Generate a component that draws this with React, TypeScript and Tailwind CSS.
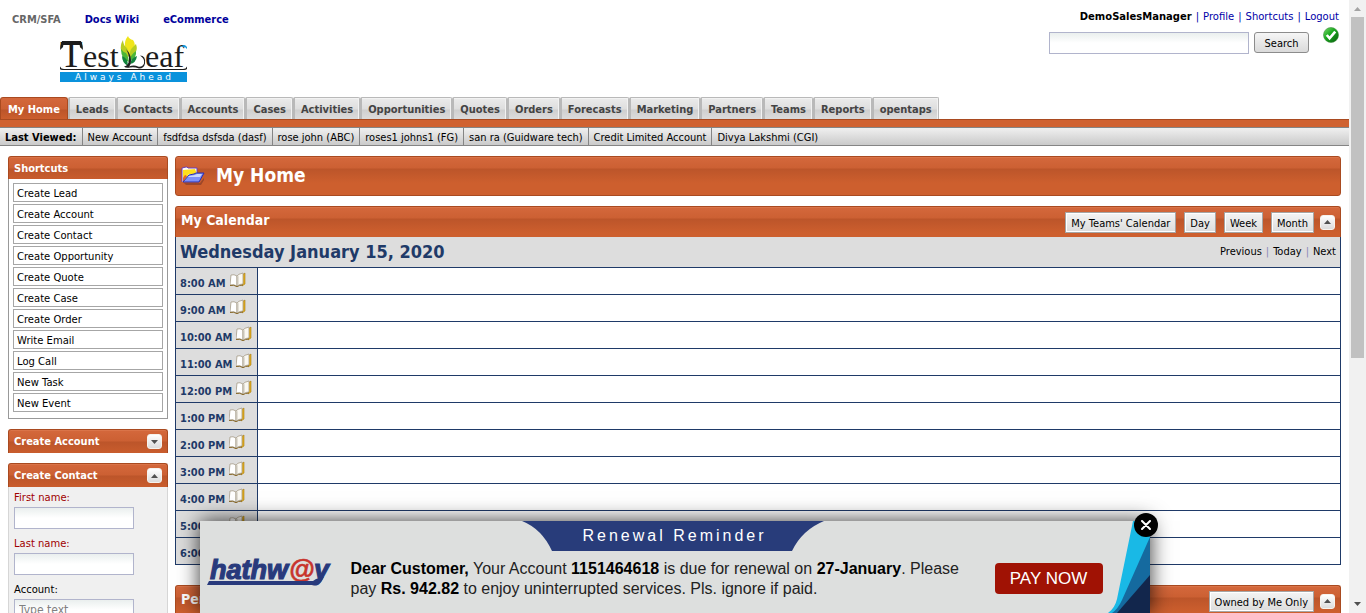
import React from "react";

const TAHOMA = "font-['DejaVu_Sans_Condensed','DejaVu_Sans',sans-serif] [font-stretch:condensed]";
const BAR =
  "border border-[#a94a20] border-b-0 rounded-t-[3px] bg-[linear-gradient(to_bottom,#d4683c_0px,#cc6033_11px,#bc552a_12px,#cd5f2e_26px)] shadow-[inset_0_1px_0_#da7449]";
const FIELD =
  "border border-[#b1b4cc] bg-[linear-gradient(to_bottom,#eaefee_0px,#ffffff_10px)] outline-none h-[22px] px-1";
const SMALL_BTN =
  "h-[21px] border border-[#a5a5a5] bg-linear-to-b from-[#f4f4f4] to-[#dcdcdc] px-[5px] pt-[2px] text-[11px] leading-[17px] text-black shadow-[inset_1px_1px_0_#fff,inset_0_-1px_0_#fff]";

const tabs = [
  "My Home", "Leads", "Contacts", "Accounts", "Cases", "Activities", "Opportunities", "Quotes",
  "Orders", "Forecasts", "Marketing", "Partners", "Teams", "Reports", "opentaps",
];

const viewed = [
  "New Account", "fsdfdsa dsfsda (dasf)", "rose john (ABC)", "roses1 johns1 (FG)",
  "san ra (Guidware tech)", "Credit Limited Account", "Divya Lakshmi (CGI)",
];

const shortcuts = [
  "Create Lead", "Create Account", "Create Contact", "Create Opportunity", "Create Quote",
  "Create Case", "Create Order", "Write Email", "Log Call", "New Task", "New Event",
];

const hours = [
  "8:00 AM", "9:00 AM", "10:00 AM", "11:00 AM", "12:00 PM", "1:00 PM",
  "2:00 PM", "3:00 PM", "4:00 PM", "5:00 PM", "6:00 PM",
];

function TestLeafLogo() {
  return (
    <svg width="128" height="48" viewBox="0 0 128 48" role="img" aria-label="TestLeaf">
      <g fill="#1c1c1c" fontFamily="'Liberation Serif', serif">
        <text x="0" y="31" fontSize="37">T</text>
        <path d="M2 5h19l1 4H1z" />
        <path d="M0 14Q0 6 4 5l-1 6zM23 14Q23 6 19 5l1 6z" />
        <text x="23" y="31" fontSize="32">est</text>
        <text x="85" y="31" fontSize="32">eaf</text>
        <path d="M0 30.500q1 2.500 4 2.500h119q3 0 4-2.500v2.500q-1 1-3 1H3q-3 0-3-1z" />
      </g>
      <path d="M121 11q3-4 6 0v2q-2-3-6-2z" fill="#159ade" />
      <path d="M65 11q-1-6 3-11q1 3 5 4q3 4 1 9l-4 6z" fill="#f0e51a" />
      <path d="M63 4q0 5 4 8l3 9q-7-1-9-7q-1-5 2-10zM76 8q2 6-1 9l-5 5q-1-7 2-10z" fill="#b7cd22" />
      <path d="M61 13q2 3 5 4q3 4 3 9q-8-3-8-13zM76 15q1 7-6 10q0-6 6-10z" fill="#4cb637" />
      <path d="M62 20q6 2 6 10q-6-3-6-10zM77 20q-1 7-7 8q1-6 7-8z" fill="#12833c" />
      <path d="M66 13q5 5 5 11q0 5-2 6.500q5-2 9 0q4 1 6-3q1-5-4-8q6 0 5 8q-1 5-6 5q-5-2-9-1q-4 1-6-1q5-1 5-7q0-6-3-10.500z" fill="#202020" />
      <path d="M0 36h127v10H0z" fill="#0a92dc" />
      <text x="15" y="44" fontSize="9" letterSpacing="3" fill="#fff" fontFamily="'DejaVu Sans', sans-serif">Always Ahead</text>
    </svg>
  );
}

function CheckIcon() {
  return (
    <svg width="16" height="16" viewBox="0 0 17 17" role="img" aria-label="Online">
      <defs>
        <linearGradient id="ball" x1="0" y1="0" x2="1" y2="1">
          <stop offset="0" stopColor="#7fe070" />
          <stop offset=".45" stopColor="#16a51c" />
          <stop offset="1" stopColor="#0b5b10" />
        </linearGradient>
      </defs>
      <circle cx="8.500" cy="8.500" r="8" fill="url(#ball)" stroke="#3a8b3a" strokeWidth=".6" />
      <path d="M4 8.500l3 3.500l6-7" fill="none" stroke="#fff" strokeWidth="2.800" />
    </svg>
  );
}

function FolderIcon() {
  return (
    <svg width="24" height="20" viewBox="0 0 24 20" aria-hidden="true">
      <path d="M3 17h16l4-5v2l-3 5H5z" fill="#7c3526" opacity=".6" />
      <path d="M1 16V2l4-1h1l1 1h9v5" fill="#fff" stroke="#6a3fb4" strokeWidth="1" />
      <path d="M2 4l12-1l2 5H8l-5 8H2z" fill="#ffe01c" />
      <path d="M2 12l2-3l2 1l-4 6z" fill="#e2622a" />
      <path d="M2 16L8 9l5-1l2-1h8l-5 9z" fill="#7d90fa" stroke="#2a30b0" strokeWidth="1" />
      <path d="M8 10l6-1l2-1h5l-2 3H7z" fill="#c9d6ff" />
    </svg>
  );
}

function BookIcon() {
  return (
    <svg width="16" height="16" viewBox="0 0 16 16" aria-hidden="true">
      <path d="M12 3l3-2v11l-3 2z" fill="#e3ad1c" stroke="#a87c14" strokeWidth=".6" />
      <path d="M1 3q3-1 6 1v10q-3-2-7-1z" fill="#fff" stroke="#a59a86" strokeWidth=".8" />
      <path d="M7 4q1-2 6-3v11q-4 0-6 2z" fill="#faf8f2" stroke="#a59a86" strokeWidth=".8" />
      <path d="M7 5l1.500-1v8L7 14z" fill="#c9c4b8" />
      <path d="M0 13.500q4-1 7 1.200q2-1.500 6-1.700" fill="none" stroke="#8a6b2c" strokeWidth="1" />
    </svg>
  );
}

function ToggleButton({ up, label }: { up: boolean; label: string }) {
  return (
    <button
      aria-label={label}
      className="flex h-[15px] w-[15px] items-center justify-center rounded-[3px] border border-[#f6f3ee] bg-linear-to-b from-white to-[#dcdcdc]"
    >
      <svg width="7" height="4" viewBox="0 0 7 4" aria-hidden="true">
        <path d={up ? "M0 4L3.500 0L7 4z" : "M0 0h7L3.500 4z"} fill="#505050" />
      </svg>
    </button>
  );
}

function Header() {
  return (
    <header className="flex h-[97px] justify-between">
      <div>
        <nav className={`${TAHOMA} flex gap-6 pt-3 pl-3 text-[11px] leading-[15px] font-bold`}>
          <span className="text-[#666]">CRM/SFA</span>
          <a href="#wiki" className="text-[#00009c]">Docs Wiki</a>
          <a href="#shop" className="text-[#00009c]">eCommerce</a>
        </nav>
        <div className="pt-[9px] pl-[60px]">
          <TestLeafLogo />
        </div>
      </div>
      <div className="pt-[10px] pr-[10px]">
        <div className="flex justify-end gap-1 font-['DejaVu_Sans',sans-serif] text-[10px] leading-[13px] text-[#0000a8]">
          <b className="text-black">DemoSalesManager</b>|<a href="#profile">Profile</a>|
          <a href="#shortcuts">Shortcuts</a>|<a href="#logout">Logout</a>
        </div>
        <form className="flex items-start justify-end pt-1" onSubmit={(e) => e.preventDefault()}>
          <input aria-label="Search" className={`${FIELD} mt-[5px] w-[200px]`} />
          <button className={`${TAHOMA} mt-[5px] ml-[5px] h-[21px] w-[55px] rounded-[3px] border border-[#8c8c8c] bg-linear-to-b from-[#f6f6f6] to-[#dadada] pt-[2px] text-[11px] leading-[17px]`}>
            Search
          </button>
          <span className="ml-[14px]"><CheckIcon /></span>
        </form>
      </div>
    </header>
  );
}

function Tabs() {
  return (
    <nav className={`${TAHOMA} flex h-[22px] text-[11px] leading-[23px] font-bold whitespace-nowrap`}>
      {tabs.map((t, i) => (
        <a
          key={t}
          href="#tab"
          className={
            i === 0
              ? "rounded-t-[3px] border border-b-0 border-[#a94a20] bg-[linear-gradient(to_bottom,#d4683c_0px,#cc6033_11px,#bc552a_12px,#cd5f2e_22px)] px-[7px] text-white"
              : "rounded-t-[2px] border border-b-0 border-l-2 border-[#b9b9b9] bg-[linear-gradient(to_bottom,#ebebeb_0px,#dedede_11px,#cfcfcf_12px,#dddddd_22px)] px-[6px] text-[#444] shadow-[inset_-1px_1px_0_#f2f2f2]"
          }
        >
          {t}
        </a>
      ))}
    </nav>
  );
}

function LastViewed() {
  return (
    <div className={`${TAHOMA} flex h-[19px] border-y border-[#858585] bg-linear-to-b from-[#f0f0f0] to-[#cacaca] text-[11px] leading-[19px] whitespace-nowrap text-black`}>
      <b className="px-[5px]">Last Viewed:</b>
      {viewed.map((v) => (
        <a key={v} href="#record" className="border-l border-[#858585] px-[5px]">{v}</a>
      ))}
    </div>
  );
}

function Sidebar() {
  return (
    <aside className="w-[160px] shrink-0 font-['DejaVu_Sans',sans-serif] text-[10px]">
      <h2 className={`${BAR} ${TAHOMA} h-[23px] px-[5px] text-[11px] leading-[23px] font-bold text-white`}>Shortcuts</h2>
      <ul className="flex flex-col gap-[2px] border border-t-0 border-[#999] p-1 pb-[6px]">
        {shortcuts.map((s) => (
          <li key={s} className="h-[19px] border border-[#a6a6a6] px-[3px] leading-[20px] text-black">
            <a href="#shortcut">{s}</a>
          </li>
        ))}
      </ul>
      <div className={`${BAR} ${TAHOMA} mt-[10px] flex h-6 items-center justify-between px-[5px] text-[11px] leading-[24px] font-bold text-white`}>
        <h2>Create Account</h2>
        <ToggleButton up={false} label="Expand Create Account" />
      </div>
      <div className={`${BAR} ${TAHOMA} mt-[10px] flex h-6 items-center justify-between px-[5px] text-[11px] leading-[24px] font-bold text-white`}>
        <h2>Create Contact</h2>
        <ToggleButton up label="Collapse Create Contact" />
      </div>
      <form className="flex flex-col border border-t-0 border-[#d6d6d6] bg-[#f0f0f0] px-[5px] pb-2" onSubmit={(e) => e.preventDefault()}>
        <label htmlFor="first" className="pt-[3px] pb-px leading-[16px] text-[#a00000]">First name:</label>
        <input id="first" className={`${FIELD} w-[120px]`} />
        <label htmlFor="last" className="pt-[7px] pb-px leading-[16px] text-[#a00000]">Last name:</label>
        <input id="last" className={`${FIELD} w-[120px]`} />
        <label htmlFor="account" className="pt-[7px] pb-px leading-[16px] text-black">Account:</label>
        <input id="account" placeholder="Type text" className={`${FIELD} ${TAHOMA} w-[120px] text-[12px] placeholder:text-[#808080]`} />
      </form>
    </aside>
  );
}

function Calendar() {
  return (
    <section className={TAHOMA}>
      <div className={`${BAR} flex h-[31px] items-center px-[5px]`}>
        <h2 className="grow pb-[3px] text-[14px] font-bold text-white">My Calendar</h2>
        <div className="flex items-center gap-2">
          {["My Teams' Calendar", "Day", "Week", "Month"].map((b) => (
            <button key={b} className={SMALL_BTN}>{b}</button>
          ))}
        </div>
        <span className="ml-[6px]"><ToggleButton up label="Collapse calendar" /></span>
      </div>
      <div className="border border-t-0 border-[#1f3a68]">
        <div className="flex h-[30px] items-center justify-between bg-[#dddddd] px-1">
          <h3 className="text-[18px] leading-[32px] font-bold text-[#1f3a68]">Wednesday January 15, 2020</h3>
          <div className="flex gap-1 pt-px text-[11px] text-[#8888b8]">
            <a href="#prev" className="text-black">Previous</a>|<a href="#today" className="text-black">Today</a>|
            <a href="#next" className="text-black">Next</a>
          </div>
        </div>
        <table className="w-full border-separate border-spacing-0">
          <tbody>
            {hours.map((h) => (
              <tr key={h} className="h-[27px]">
                <th className="w-[82px] border-t border-r border-[#1f3a68] bg-[#dddddd] p-0 pl-1 text-left">
                  <a href="#slot" className="flex h-[26px] items-start gap-1 text-[11px] leading-[16px] font-bold whitespace-nowrap text-[#1f3a68]">
                    <span className="pt-2">{h}</span>
                    <span className="pt-1"><BookIcon /></span>
                  </a>
                </th>
                <td className="border-t border-[#1f3a68] bg-white p-0" />
              </tr>
            ))}
          </tbody>
        </table>
      </div>
    </section>
  );
}

function HathwayLogo() {
  return (
    <svg width="126" height="30" viewBox="0 0 126 30" role="img" aria-label="hathway">
      <g fontFamily="'Liberation Sans', sans-serif" fontWeight="bold" fontStyle="italic" fontSize="27" strokeWidth="1.200">
        <text x="3" y="21" fill="#283a7c" stroke="#283a7c">hathw</text>
        <text x="107" y="21" fill="#283a7c" stroke="#283a7c">y</text>
        <text x="82" y="20" fill="#c8342c" stroke="#c8342c" strokeWidth=".6" fontSize="26">@</text>
      </g>
      <path d="M2 23h104l3-2l8-2l-3 5l-4 3H0z" fill="#283a7c" />
    </svg>
  );
}

function RenewalBanner() {
  return (
    <div role="dialog" aria-label="Renewal Reminder" className="absolute inset-x-0 bottom-0 mx-auto h-[92px] w-[950px] bg-[#dddfde] font-['Liberation_Sans',sans-serif] shadow-[0_0_20px_rgba(0,0,0,0.8)]">
      <svg className="absolute top-0 left-[322px]" width="302" height="30" viewBox="0 0 302 30" aria-hidden="true">
        <path d="M0 0H302Q280 9 270 30H30Q20 8 0 0z" fill="#283c7a" />
      </svg>
      <svg className="absolute right-0 bottom-0" width="42" height="92" viewBox="0 0 42 92" aria-hidden="true">
        <path d="M25 0H42V92H0Q7 87 9 78z" fill="#19b9e6" />
        <path d="M42 16V92H4Q10 88 14 79z" fill="#156a9f" />
        <path d="M42 54V92H9z" fill="#12264c" />
      </svg>
      <div className="relative flex h-full flex-col">
        <h2 className="h-[30px] text-center text-[16px] leading-[30px] tracking-[3px] text-white">Renewal Reminder</h2>
        <div className="flex items-start">
          <div className="w-[151px] pt-[7px] pl-[7px]"><HathwayLogo /></div>
          <p className="w-[644px] pt-2 text-[16px] leading-[20px] text-[#222]">
            <b className="text-black">Dear Customer,</b> Your Account <b className="text-black">1151464618</b> is due for renewal on{" "}
            <b className="text-black">27-January</b>. Please
            <br />
            pay <b className="text-black">Rs. 942.82</b> to enjoy uninterrupted services. Pls. ignore if paid.
          </p>
          <button className="mt-3 h-[31px] w-[108px] rounded-[4px] bg-[#a01204] text-[17px] text-white">PAY NOW</button>
        </div>
      </div>
      <button aria-label="Close" className="absolute -top-2 -right-2 flex h-6 w-6 items-center justify-center rounded-full bg-black">
        <svg width="10" height="10" viewBox="0 0 10 10" aria-hidden="true">
          <path d="M1 1l8 8M9 1L1 9" stroke="#fff" strokeWidth="2" strokeLinecap="round" />
        </svg>
      </button>
    </div>
  );
}

function Scrollbar() {
  return (
    <div aria-hidden="true" className="flex w-[17px] shrink-0 flex-col items-center bg-[#f1f1f1]">
      <svg width="17" height="17" viewBox="0 0 17 17"><path d="M5 11l3.500-4L12 11z" fill="#a3a3a3" /></svg>
      <div className="h-[341px] w-[13px] bg-[#c1c1c1]" />
      <svg className="mt-auto" width="17" height="17" viewBox="0 0 17 17"><path d="M5 6l3.500 4L12 6z" fill="#505050" /></svg>
    </div>
  );
}

export default function App() {
  return (
    <div className="flex h-screen overflow-hidden bg-white">
      <div className="relative min-w-0 grow overflow-hidden">
        <Header />
        <Tabs />
        <div className="h-2 border-t border-[#a94a20] bg-[#d06231]" />
        <LastViewed />
        <div className="flex gap-[7px] px-2 pt-[10px]">
          <Sidebar />
          <main className="min-w-0 grow">
            <div className="flex h-10 items-center gap-[11px] rounded-[3px] border border-[#a94a20] bg-[linear-gradient(to_bottom,#d4683c_0px,#cc6033_11px,#bc552a_12px,#cd5f2e_26px)] px-[5px] shadow-[inset_0_1px_0_#da7449]">
              <FolderIcon />
              <h1 className={`${TAHOMA} pb-px text-[19px] font-bold text-white`}>My Home</h1>
            </div>
            <div className="pt-[10px]"><Calendar /></div>
            <section className={`${BAR} ${TAHOMA} mt-5 flex h-[31px] items-center px-[5px]`}>
              <h2 className="grow pb-[3px] text-[14px] font-bold text-white">Pending Activities</h2>
              <button className={SMALL_BTN}>Owned by Me Only</button>
              <span className="ml-[6px]"><ToggleButton up label="Collapse pending activities" /></span>
            </section>
          </main>
        </div>
        <RenewalBanner />
      </div>
      <Scrollbar />
    </div>
  );
}
